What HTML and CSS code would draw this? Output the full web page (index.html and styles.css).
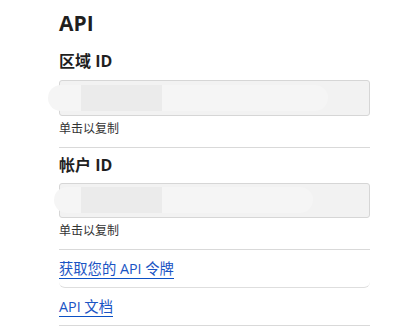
FILE: index.html
```html
<!DOCTYPE html>
<html lang="zh-CN">

<head>
  <meta charset="UTF-8">
  <meta name="viewport" content="width=device-width, initial-scale=1.0">
  <title>API</title>
  <link rel="stylesheet" href="styles.css">
</head>

<body>
  <div class="panel">
    <h2 class="title">API</h2>

    <div class="field">
      <h3 class="label">区域 ID</h3>
      <div class="copy-box">
        <div class="mask mask-1">
          <span class="mask-dark"></span>
        </div>
      </div>
      <p class="hint">单击以复制</p>
    </div>

    <div class="field">
      <h3 class="label">帐户 ID</h3>
      <div class="copy-box">
        <div class="mask mask-2">
          <span class="mask-dark"></span>
        </div>
      </div>
      <p class="hint">单击以复制</p>
    </div>

    <div class="link-row card-row">
      <a href="#" class="link">获取您的 API 令牌</a>
    </div>
    <div class="link-row">
      <a href="#" class="link">API 文档</a>
    </div>
  </div>
</body>

</html>
```

FILE: styles.css
```css
* {
  margin: 0;
  padding: 0;
  box-sizing: border-box;
}

body {
  background-color: #fff;
  color: #222;
  font-family: "Open Sans", "Noto Sans CJK SC", sans-serif;
}

.panel {
  width: 311px;
  margin-left: 59px;
  padding-top: 9px;
}

.title {
  font-size: 21px;
  font-weight: 700;
  line-height: 28px;
  color: #1f1f1f;
}

.label {
  font-size: 16px;
  font-weight: 700;
  line-height: 22px;
  color: #1f1f1f;
  margin-top: 13px;
}

.field + .field .label {
  margin-top: 6px;
}

.copy-box {
  position: relative;
  height: 36px;
  margin-top: 8px;
  background: #f2f2f2;
  border: 1px solid #d6d6d6;
  border-radius: 3px;
}

.field + .field .copy-box {
  height: 35px;
  margin-top: 7px;
}

/* redaction blob over the value */
.mask {
  position: absolute;
  top: 4px;
  height: 26px;
  background: #f5f5f5;
  border-radius: 13px;
  overflow: hidden;
}

.mask-1 {
  left: -12px;
  width: 280px;
}

.mask-2 {
  left: -6px;
  top: 3px;
  width: 259px;
}

.mask-dark {
  position: absolute;
  left: 33px;
  top: 0;
  width: 81px;
  height: 26px;
  background: #ebebeb;
}

.mask-2 .mask-dark {
  left: 27px;
}

.hint {
  font-size: 12px;
  line-height: 17px;
  margin-top: 4px;
  color: #333;
  padding-bottom: 10px;
  border-bottom: 1px solid #d9d9d9;
}

.link-row {
  padding: 8px 0 8px;
  border-bottom: 1px solid #d9d9d9;
  line-height: 20px;
}

.card-row {
  border-radius: 0 0 6px 6px;
  border-bottom-color: #dedede;
}

.link {
  font-size: 14.3px;
  color: #1a54c4;
  text-decoration: none;
  border-bottom: 1px solid #0b50c4;
}
```
